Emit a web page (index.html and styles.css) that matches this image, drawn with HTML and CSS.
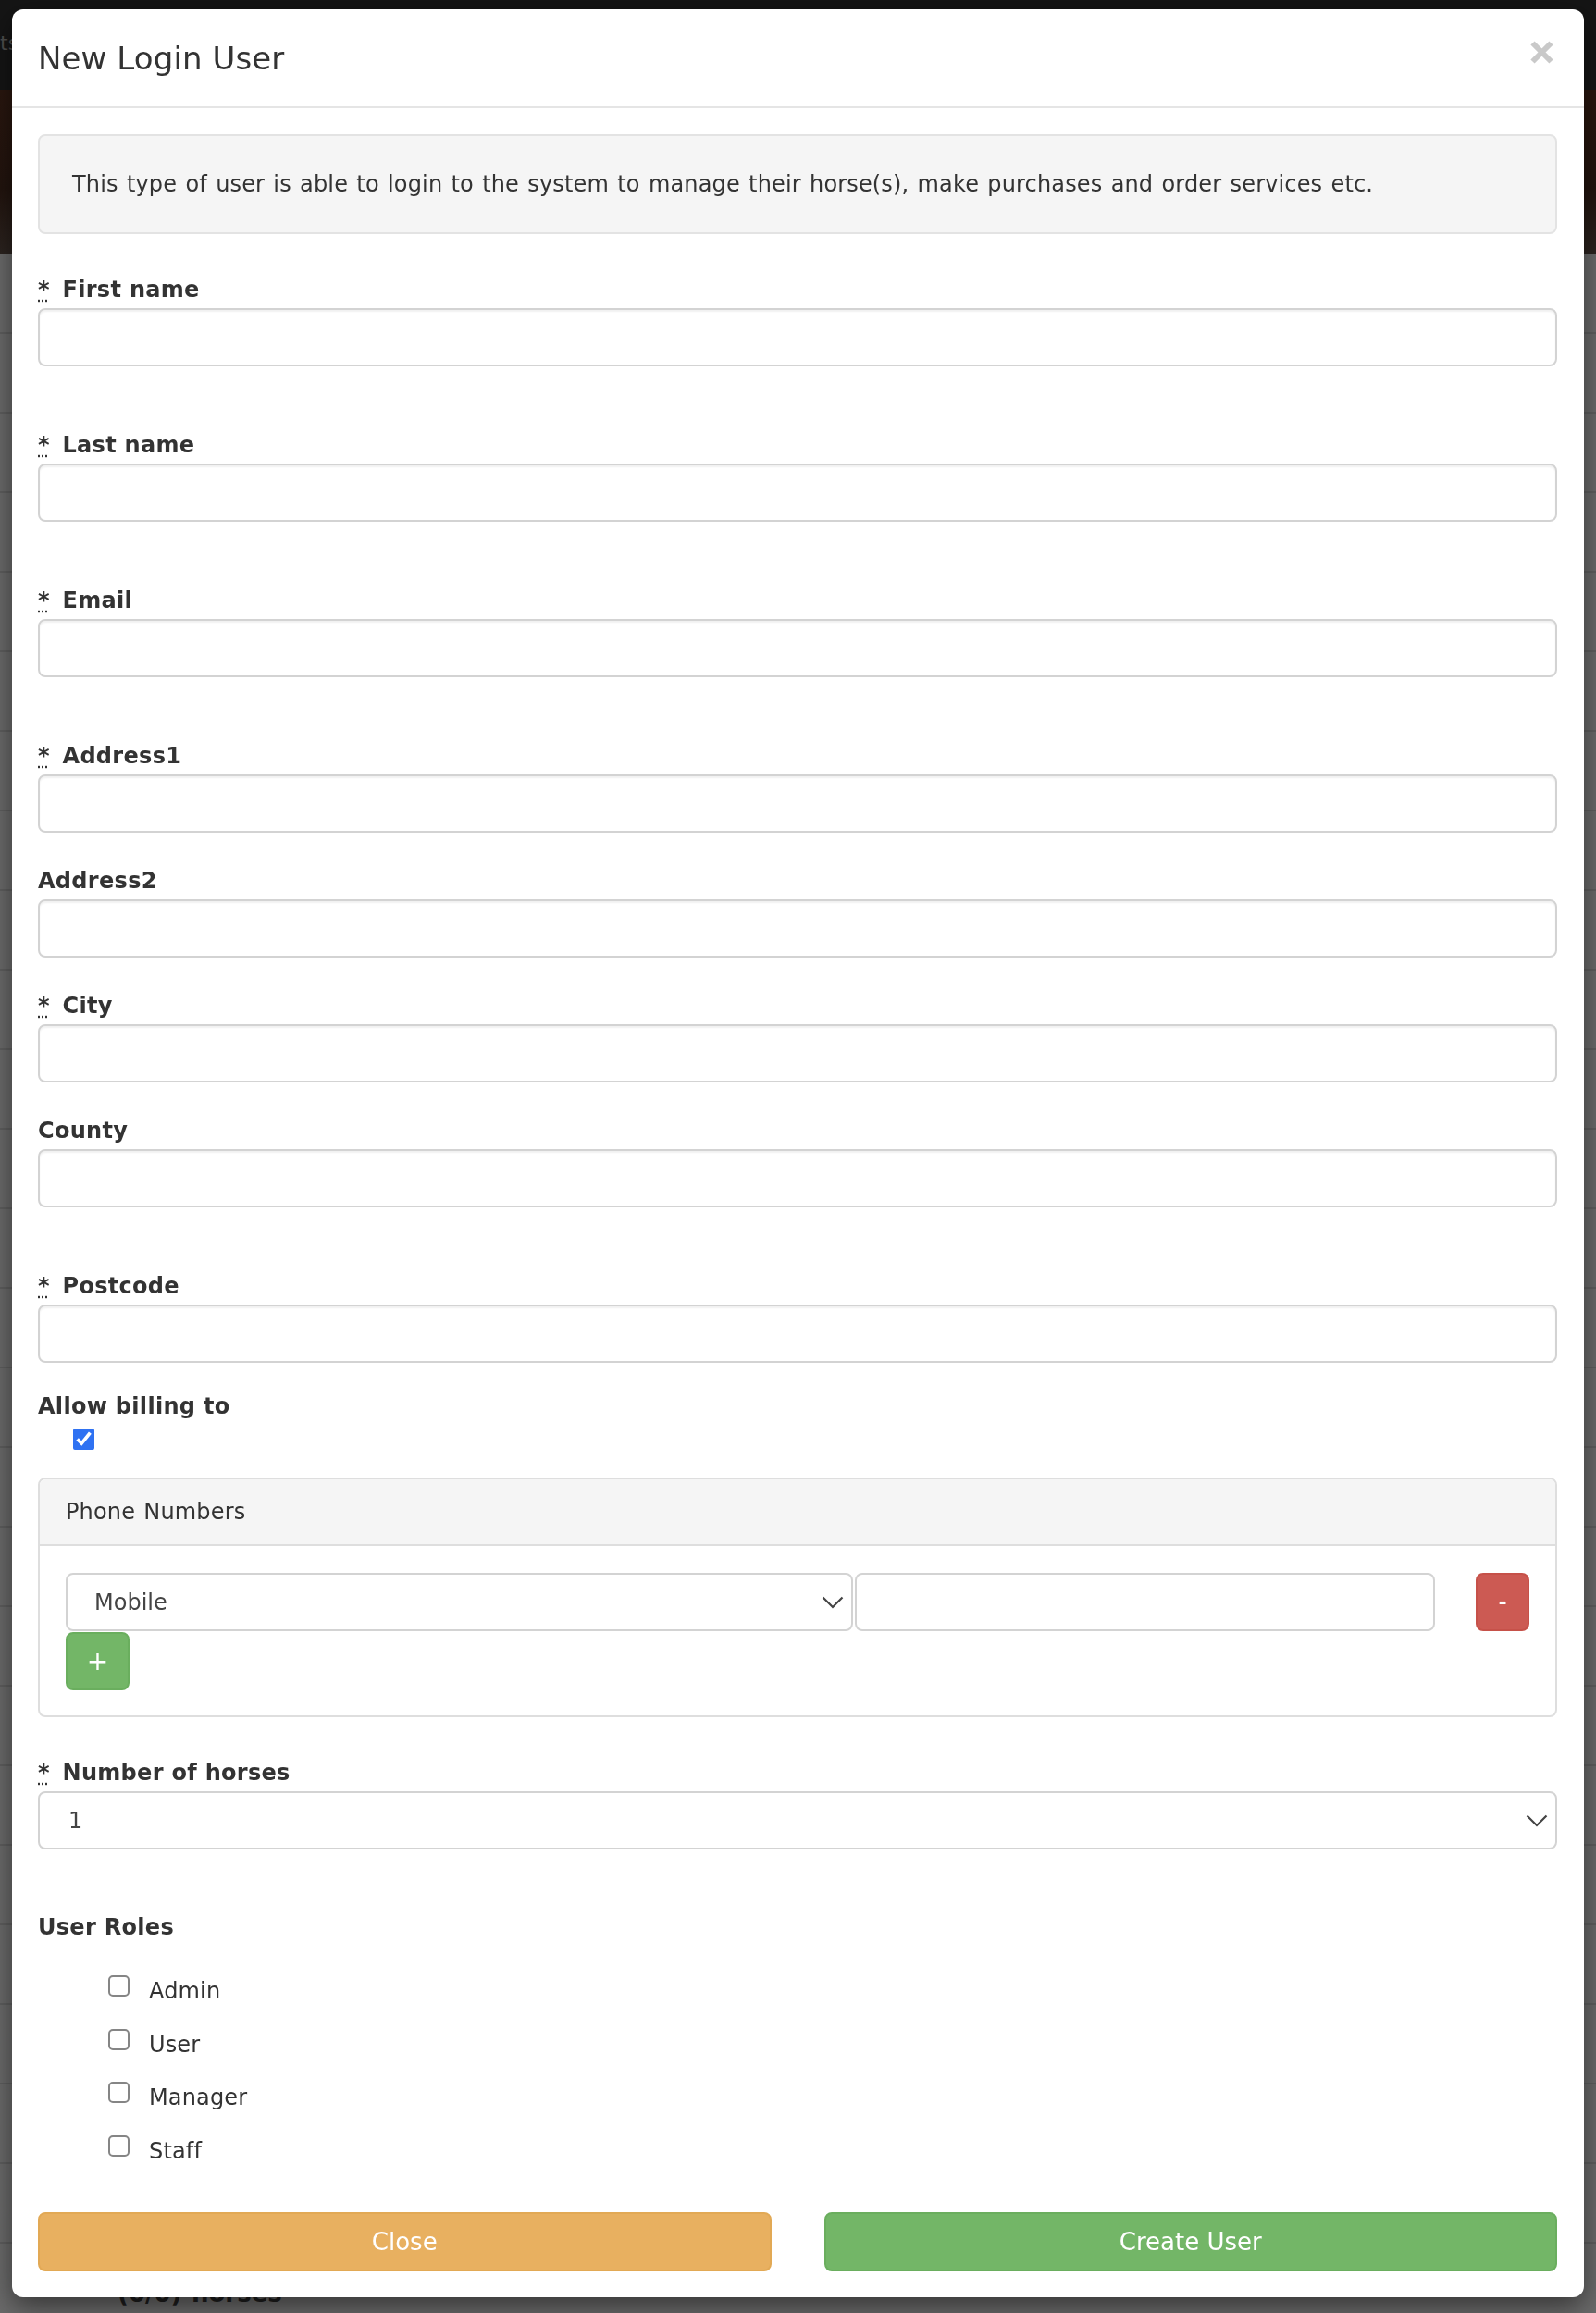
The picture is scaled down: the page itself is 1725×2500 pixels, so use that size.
FILE: index.html
```html
<!DOCTYPE html>
<html lang="en">
<head>
<meta charset="utf-8">
<title>New Login User</title>
<link rel="stylesheet" href="styles.css">
</head>
<body>
<div class="page">
  <header class="topbar"><span class="topbar-text">ts</span></header>
  <div class="banner"></div>
  <main class="page-content">
    <p class="horses-count">(0/0) horses</p>
  </main>
</div>

<div class="modal" role="dialog" aria-labelledby="modal-title">
  <div class="modal-header">
    <h4 class="modal-title" id="modal-title">New Login User</h4>
    <button class="close" type="button" aria-label="Close">
      <svg width="25" height="25" viewBox="0 0 25 25"><path d="M2.5 2.5 L22.5 22.5 M22.5 2.5 L2.5 22.5" stroke="#c9c9c9" stroke-width="6" fill="none"/></svg>
    </button>
  </div>
  <div class="modal-body">
    <div class="well">This type of user is able to login to the system to manage their horse(s), make purchases and order services etc.</div>
    <form class="form">
      <div class="form-group req">
        <label class="control-label"><abbr title="required">*</abbr> First name</label>
        <input class="form-control" type="text">
      </div>
      <div class="form-group req">
        <label class="control-label"><abbr title="required">*</abbr> Last name</label>
        <input class="form-control" type="text">
      </div>
      <div class="form-group req">
        <label class="control-label"><abbr title="required">*</abbr> Email</label>
        <input class="form-control" type="email">
      </div>
      <div class="form-group">
        <label class="control-label"><abbr title="required">*</abbr> Address1</label>
        <input class="form-control" type="text">
      </div>
      <div class="form-group">
        <label class="control-label">Address2</label>
        <input class="form-control" type="text">
      </div>
      <div class="form-group">
        <label class="control-label"><abbr title="required">*</abbr> City</label>
        <input class="form-control" type="text">
      </div>
      <div class="form-group req">
        <label class="control-label">County</label>
        <input class="form-control" type="text">
      </div>
      <div class="form-group last-field">
        <label class="control-label"><abbr title="required">*</abbr> Postcode</label>
        <input class="form-control" type="text">
      </div>
      <div class="form-group billing">
        <label class="control-label">Allow billing to</label>
        <div class="billing-check"><input type="checkbox" class="check" checked></div>
      </div>

      <div class="panel">
        <div class="panel-heading">Phone Numbers</div>
        <div class="panel-body">
          <div class="phone-row">
            <div class="select-wrap phone-type">
              <select class="form-control select">
                <option>Mobile</option>
                <option>Home</option>
                <option>Work</option>
              </select>
              <svg class="chevron" width="24" height="14" viewBox="0 0 24 14"><path d="M1.5 1.5 L12 12 L22.5 1.5" stroke="#444" stroke-width="2.2" fill="none"/></svg>
            </div>
            <input class="form-control phone-number" type="text">
            <button type="button" class="btn btn-danger btn-remove">-</button>
          </div>
          <button type="button" class="btn btn-success btn-add">+</button>
        </div>
      </div>

      <div class="form-group horses">
        <label class="control-label"><abbr title="required">*</abbr> Number of horses</label>
        <div class="select-wrap">
          <select class="form-control select horses-select">
            <option>1</option>
            <option>2</option>
            <option>3</option>
          </select>
          <svg class="chevron" width="24" height="14" viewBox="0 0 24 14"><path d="M1.5 1.5 L12 12 L22.5 1.5" stroke="#444" stroke-width="2.2" fill="none"/></svg>
        </div>
      </div>

      <div class="roles">
        <div class="control-label">User Roles</div>
        <ul class="role-list">
          <li class="role"><input type="checkbox" class="role-check"><span>Admin</span></li>
          <li class="role"><input type="checkbox" class="role-check"><span>User</span></li>
          <li class="role"><input type="checkbox" class="role-check"><span>Manager</span></li>
          <li class="role"><input type="checkbox" class="role-check"><span>Staff</span></li>
        </ul>
      </div>

      <div class="modal-actions">
        <button type="button" class="btn btn-warning btn-block">Close</button>
        <button type="submit" class="btn btn-success btn-block">Create User</button>
      </div>
    </form>
  </div>
</div>
</body>
</html>
```
FILE: styles.css
```css
* { box-sizing: border-box; }

html, body {
  margin: 0;
  padding: 0;
}

body {
  width: 1725px;
  height: 2500px;
  overflow: hidden;
  font-family: "DejaVu Sans", Verdana, sans-serif;
  font-size: 24px;
  line-height: 34px;
  letter-spacing: 0.15px;
  word-spacing: 1.5px;
  color: #333;
  background: #6a6a6a;
}

/* ---------- page behind the dialog (dimmed) ---------- */
.page {
  height: 2500px;
  display: flex;
  flex-direction: column;
}

.topbar {
  height: 97px;
  flex: 0 0 97px;
  background: #151515;
  color: #4e4e4e;
  font-size: 22px;
  line-height: 30px;
  padding-top: 32px;
}

.banner {
  flex: 0 0 178px;
  background: linear-gradient(180deg, #2a170f 0%, #22140e 60%, #2c2420 100%);
}

.page-content {
  flex: 1;
  display: flex;
  flex-direction: column;
  justify-content: flex-end;
  background-color: #6b6b6b;
  background-image: repeating-linear-gradient(180deg, transparent 0, transparent 84px, #5f5f5f 84px, #5f5f5f 86px);
}

.horses-count {
  margin: 0 0 4px 127px;
  font-size: 26px;
  line-height: 34px;
  font-weight: bold;
  letter-spacing: 0;
  color: #1e1e1e;
}

/* ---------- dialog ---------- */
.modal {
  position: fixed;
  left: 13px;
  top: 10px;
  width: 1699px;
  background: #fff;
  border-radius: 12px;
  box-shadow: 0 10px 30px rgba(0, 0, 0, 0.5);
}

.modal-header {
  display: flex;
  justify-content: space-between;
  align-items: flex-start;
  padding: 29px 33px 28px 28px;
  border-bottom: 2px solid #e5e5e5;
}

.modal-title {
  margin: 0;
  font-size: 34px;
  line-height: 48px;
  font-weight: normal;
  letter-spacing: 0.1px;
  word-spacing: 0;
  color: #333;
}

.close {
  display: block;
  margin-top: 5px;
  width: 25px;
  height: 25px;
  padding: 0;
  border: 0;
  background: none;
  cursor: pointer;
}

.close svg { display: block; }

.modal-body {
  padding: 28px 29px 28px 28px;
}

.well {
  background: #f5f5f5;
  border: 2px solid #e3e3e3;
  border-radius: 8px;
  padding: 35px 35px;
  margin-bottom: 43px;
  color: #333;
}

/* ---------- form ---------- */
.form-group { margin-bottom: 35px; }
.form-group.req { margin-bottom: 68px; }
.form-group.last-field { margin-bottom: 30px; }
.form-group.billing { margin-bottom: 28px; }
.form-group.horses { margin-bottom: 67px; }

.control-label {
  display: block;
  font-weight: bold;
  margin-bottom: 3px;
  letter-spacing: 0.3px;
  word-spacing: 0;
  color: #333;
}

abbr[title] {
  text-decoration: underline dotted;
  text-underline-offset: 3px;
  margin-right: 5px;
  cursor: help;
}

.form-control {
  display: block;
  width: 100%;
  height: 63px;
  margin: 0;
  padding: 0 31px;
  font: inherit;
  color: #444;
  background: #fff;
  border: 2px solid #d3d3d3;
  border-radius: 8px;
  box-shadow: inset 0 2px 2px rgba(0, 0, 0, 0.06);
  outline: none;
}

.select {
  appearance: none;
  -webkit-appearance: none;
  padding-right: 50px;
  box-shadow: none;
}

.select-wrap {
  position: relative;
}

.chevron {
  position: absolute;
  right: 10px;
  top: 50%;
  transform: translateY(-50%);
  pointer-events: none;
}

.billing-check {
  padding: 4px 0 0 38px;
  height: 29px;
}

.check {
  display: block;
  width: 23px;
  height: 23px;
  margin: 0;
  accent-color: #2f72f2;
}

.role-check {
  appearance: none;
  -webkit-appearance: none;
  display: block;
  flex: 0 0 23px;
  width: 23px;
  height: 23px;
  margin: 0;
  background: #fff;
  border: 2px solid #858585;
  border-radius: 5px;
}

/* ---------- phone panel ---------- */
.panel {
  border: 2px solid #dedede;
  border-radius: 8px;
  margin-bottom: 43px;
}

.panel-heading {
  background: #f5f5f5;
  border-bottom: 2px solid #dedede;
  border-radius: 6px 6px 0 0;
  padding: 18px 28px;
  color: #333;
}

.panel-body {
  padding: 29px 28px 27px;
}

.phone-row {
  display: flex;
  align-items: flex-start;
}

.phone-type {
  flex: 0 0 851px;
}

.phone-type .select {
  padding-left: 29px;
}

.phone-number {
  flex: 0 0 627px;
  width: 627px;
  margin-left: 2px;
  box-shadow: none;
}

.btn {
  display: flex;
  align-items: center;
  justify-content: center;
  border: 2px solid transparent;
  border-radius: 8px;
  font: inherit;
  color: #fff;
  cursor: pointer;
  padding: 0;
}

.btn-danger {
  background: #cc5a53;
  border-color: #c65149;
}

.btn-success {
  background: #73b667;
  border-color: #6aae5e;
}

.btn-warning {
  background: #e8b060;
  border-color: #e2a955;
}

.btn-remove {
  margin-left: auto;
  width: 58px;
  height: 63px;
  font-weight: bold;
  font-size: 22px;
}

.btn-add {
  margin-top: 1px;
  width: 69px;
  height: 63px;
  font-size: 28px;
}

/* ---------- roles ---------- */
.roles .control-label { margin-bottom: 35px; }

.role-list {
  list-style: none;
  margin: 0;
  padding: 0 0 0 76px;
  display: flex;
  flex-direction: column;
  gap: 23.7px;
}

.role {
  display: flex;
  align-items: flex-start;
  height: 34px;
}

.role span {
  margin-left: 21px;
  color: #333;
}

/* ---------- footer buttons ---------- */
.modal-actions {
  margin-top: 49px;
  display: grid;
  grid-template-columns: 1fr 1fr;
  column-gap: 57px;
}

.btn-block {
  width: 100%;
  height: 64px;
  font-size: 26px;
}
```
